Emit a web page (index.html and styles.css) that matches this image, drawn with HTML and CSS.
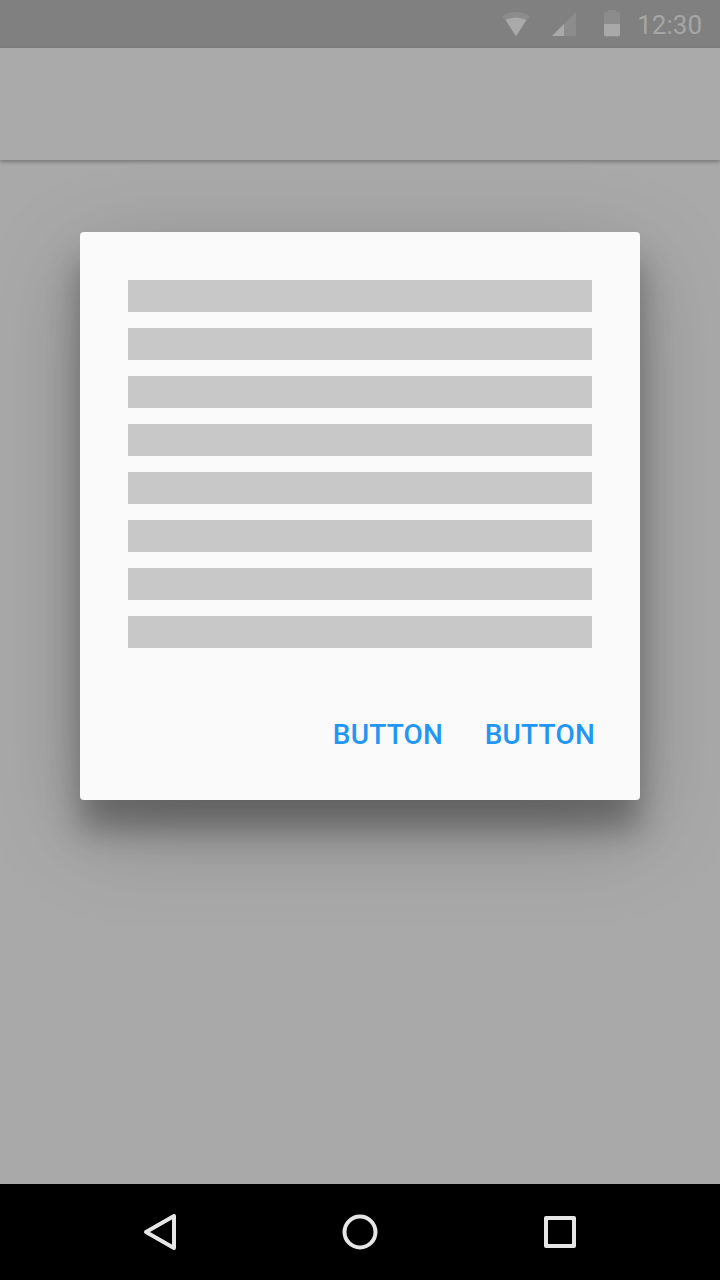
FILE: index.html
```
<!DOCTYPE html>
<html lang="en">
<head>
<meta charset="utf-8">
<title>Dialog</title>
<link rel="stylesheet" href="styles.css">
</head>
<body>
<div class="screen">
  <header class="status-bar">
    <svg class="status-icons" width="120" height="48" viewBox="500 0 120 48">
      <path class="dim" d="M502.4 16.2Q516 7.800 529.600 16.200L516 36.200Z"/>
      <path class="lit" d="M505.700 20Q516 15 526.300 20L516 36.200Z"/>
      <path class="dim" d="M576 12V36H552Z"/>
      <path class="lit" d="M564 24V36H552Z"/>
      <path class="dim" d="M608 10h8v1.700h2.500q1.500 0 1.500 1.500V24h-16V13.200q0-1.500 1.500-1.500h2.500z"/>
      <path class="lit" d="M604 24h16v10.800q0 1.500-1.500 1.500h-13q-1.500 0-1.500-1.500z"/>
    </svg>
    <span class="clock">12:30</span>
  </header>
  <div class="app-bar"></div>
  <main class="content">
    <section class="dialog" role="dialog">
      <div class="lines">
        <div class="line"></div>
        <div class="line"></div>
        <div class="line"></div>
        <div class="line"></div>
        <div class="line"></div>
        <div class="line"></div>
        <div class="line"></div>
        <div class="line"></div>
      </div>
      <div class="actions">
        <button class="action">BUTTON</button>
        <button class="action">BUTTON</button>
      </div>
    </section>
  </main>
  <nav class="nav-bar">
    <svg class="nav-icon" viewBox="0 0 48 48"><path d="M38 8V40L10 24Z" /></svg>
    <svg class="nav-icon" viewBox="0 0 48 48"><circle cx="24" cy="24" r="15.500"/></svg>
    <svg class="nav-icon" viewBox="0 0 48 48"><rect x="10" y="10" width="28" height="28"/></svg>
  </nav>
</div>
</body>
</html>
```

FILE: styles.css
```
body {
  margin: 0;
  background: #a9a9a9;
  font-family: Roboto, "Liberation Sans", sans-serif;
}

.screen {
  display: flex;
  flex-direction: column;
  width: 720px;
  height: 1280px;
  overflow: hidden;
}

.status-bar {
  display: flex;
  justify-content: space-between;
  align-items: center;
  height: 48px;
  padding: 0 18px 0 500px;
  background: #808080;
}

.status-icons .dim {
  fill: #8c8c8c;
}

.status-icons .lit {
  fill: #a9a9a9;
}

.clock {
  padding-top: 1px;
  font-size: 26px;
  line-height: 48px;
  color: #a6a6a6;
}

.app-bar {
  height: 112px;
  background: #aaa;
  box-shadow: 0 2px 4px rgba(0, 0, 0, 0.3);
}

.content {
  flex: 1;
  padding: 72px 80px 0;
}

.dialog {
  box-sizing: border-box;
  height: 568px;
  padding: 48px;
  border-radius: 4px;
  background: #fafafa;
  box-shadow: 0 30px 32px rgba(0, 0, 0, 0.3), 0 30px 96px rgba(0, 0, 0, 0.22);
}

.lines {
  display: grid;
  gap: 16px;
}

.line {
  height: 32px;
  background: #c8c8c8;
}

.actions {
  display: flex;
  justify-content: flex-end;
  gap: 41.5px;
  margin: 67px -3px 0 0;
}

.action {
  padding: 0;
  border: 0;
  background: none;
  color: #2196f3;
  font: 500 28px/40px Roboto, "Liberation Sans", sans-serif;
  letter-spacing: 0.2px;
}

.nav-bar {
  display: flex;
  justify-content: center;
  align-items: center;
  gap: 152px;
  height: 96px;
  background: #000;
  z-index: 1;
}

.nav-icon {
  width: 48px;
  height: 48px;
  fill: none;
  stroke: #e6e6e6;
  stroke-width: 4;
  stroke-linejoin: round;
}
```
